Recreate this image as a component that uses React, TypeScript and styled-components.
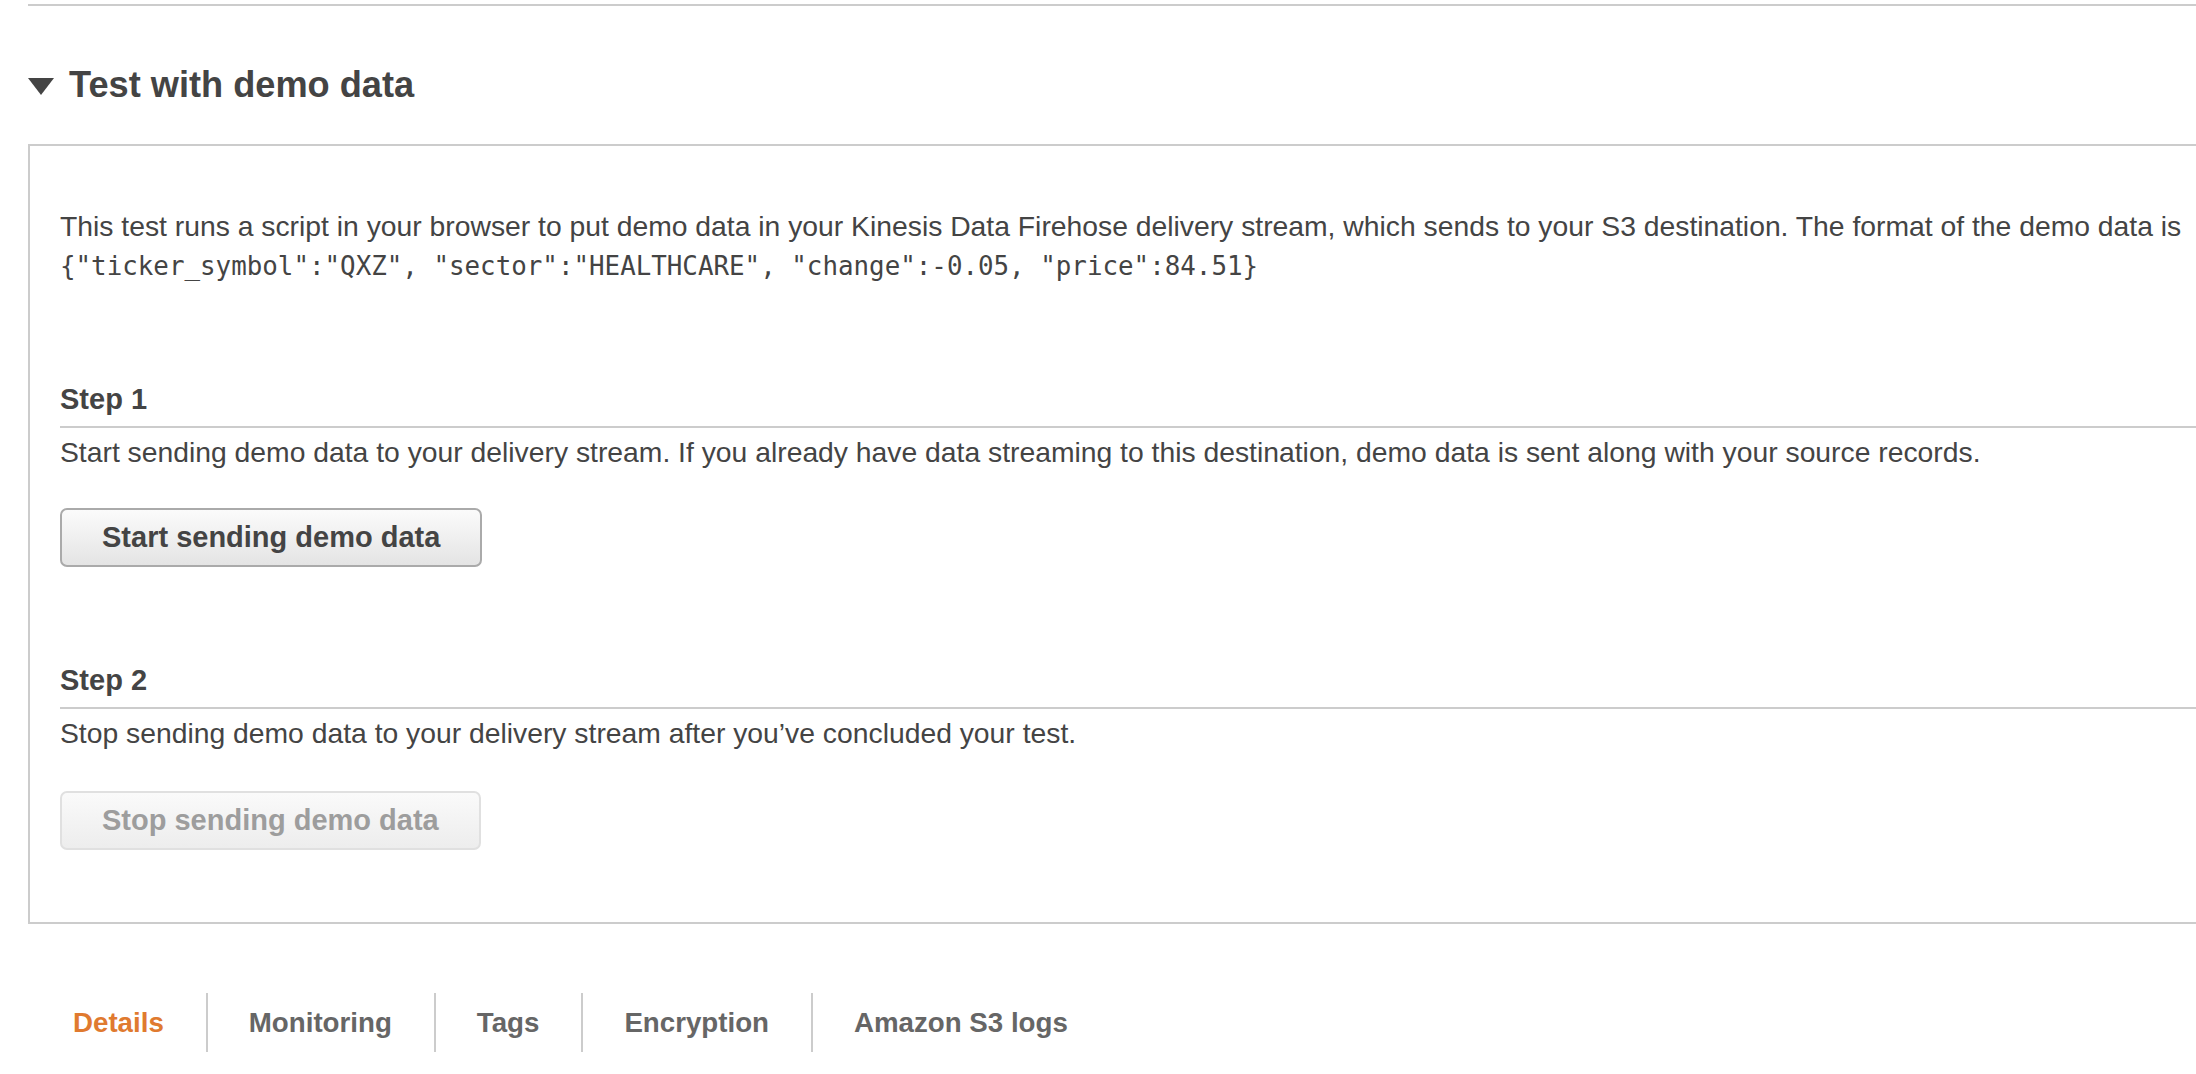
import React from "react";
import styled, { createGlobalStyle } from "styled-components";

const GlobalStyle = createGlobalStyle`
  html, body {
    margin: 0;
    padding: 0;
    background: #ffffff;
    overflow: hidden;
  }
  body {
    font-family: "Liberation Sans", Arial, Helvetica, sans-serif;
    color: #444444;
  }
`;

const Page = styled.div`
  padding: 4px 0 0 28px;
  width: 2196px;
  box-sizing: border-box;
`;

const TopRule = styled.div`
  height: 0;
  border-top: 2px solid #cccccc;
`;

const SectionHeader = styled.div`
  display: flex;
  align-items: center;
  gap: 15px;
  margin-top: 57px;
  height: 44px;
`;

const Caret = styled.svg`
  width: 26px;
  height: 17px;
  flex: none;
  margin-top: 2px;
`;

const SectionTitle = styled.h2`
  margin: 0;
  font-size: 36.2px;
  line-height: 44px;
  font-weight: 700;
  color: #444444;
  white-space: nowrap;
`;

const Panel = styled.div`
  margin-top: 37px;
  border: 2px solid #cccccc;
  border-right: none;
  padding: 60px 0 72px 30px;
`;

const Intro = styled.p`
  margin: 0;
  font-size: 28.3px;
  line-height: 40px;
  color: #444444;
  white-space: nowrap;
`;

const Code = styled.code`
  display: block;
  font-family: "DejaVu Sans Mono", "Liberation Mono", monospace;
  font-size: 25.85px;
  line-height: 40px;
  color: #444444;
`;

const Step = styled.section`
  margin-top: 93px;
`;

const StepTitle = styled.h3`
  margin: 0;
  font-size: 29px;
  line-height: 40px;
  font-weight: 700;
  color: #444444;
  padding-bottom: 7px;
  border-bottom: 2px solid #cccccc;
`;

const StepText = styled.p`
  margin: 4px 0 0;
  font-size: 28.3px;
  line-height: 40px;
  color: #444444;
  white-space: nowrap;
`;

const Button = styled.button<{ $disabled?: boolean }>`
  display: block;
  margin-top: ${(p) => (p.$disabled ? "38px" : "36px")};
  height: 59px;
  padding: 0 40px;
  box-sizing: border-box;
  font-family: "Liberation Sans", Arial, Helvetica, sans-serif;
  font-size: 29px;
  font-weight: 700;
  border-radius: 7px;
  cursor: ${(p) => (p.$disabled ? "default" : "pointer")};
  color: ${(p) => (p.$disabled ? "#9d9d9d" : "#444444")};
  border: 2px solid ${(p) => (p.$disabled ? "#e0e0e0" : "#aaaaaa")};
  background: ${(p) =>
    p.$disabled
      ? "linear-gradient(#fafafa, #ededed)"
      : "linear-gradient(#fbfbfb, #e4e4e4)"};
`;

const TabBar = styled.nav`
  display: flex;
  margin: 69px 0 0 4px;
`;

const Tab = styled.div<{ $active?: boolean; $first?: boolean }>`
  height: 59px;
  line-height: 59px;
  padding: 0 42px 0 41px;
  font-size: 27.7px;
  font-weight: 700;
  white-space: nowrap;
  color: ${(p) => (p.$active ? "#e07a2f" : "#666666")};
  border-left: ${(p) => (p.$first ? "none" : "2px solid #cccccc")};
`;

const tabs = ["Details", "Monitoring", "Tags", "Encryption", "Amazon S3 logs"];

export default function App() {
  return (
    <>
      <GlobalStyle />
      <Page>
        <TopRule />
        <SectionHeader>
          <Caret viewBox="0 0 26 17" aria-hidden="true">
            <polygon points="0,0 26,0 13,17" fill="#444444" />
          </Caret>
          <SectionTitle>Test with demo data</SectionTitle>
        </SectionHeader>
        <Panel>
          <Intro>
            This test runs a script in your browser to put demo data in your Kinesis Data Firehose
            delivery stream, which sends to your S3 destination. The format of the demo data is
            <Code>
              {'{"ticker_symbol":"QXZ", "sector":"HEALTHCARE", "change":-0.05, "price":84.51}'}
            </Code>
          </Intro>
          <Step>
            <StepTitle>Step 1</StepTitle>
            <StepText>
              Start sending demo data to your delivery stream. If you already have data streaming to
              this destination, demo data is sent along with your source records.
            </StepText>
            <Button>Start sending demo data</Button>
          </Step>
          <Step>
            <StepTitle>Step 2</StepTitle>
            <StepText>
              Stop sending demo data to your delivery stream after you’ve concluded your test.
            </StepText>
            <Button $disabled disabled>
              Stop sending demo data
            </Button>
          </Step>
        </Panel>
        <TabBar>
          {tabs.map((t, i) => (
            <Tab key={t} $active={i === 0} $first={i === 0}>
              {t}
            </Tab>
          ))}
        </TabBar>
      </Page>
    </>
  );
}
